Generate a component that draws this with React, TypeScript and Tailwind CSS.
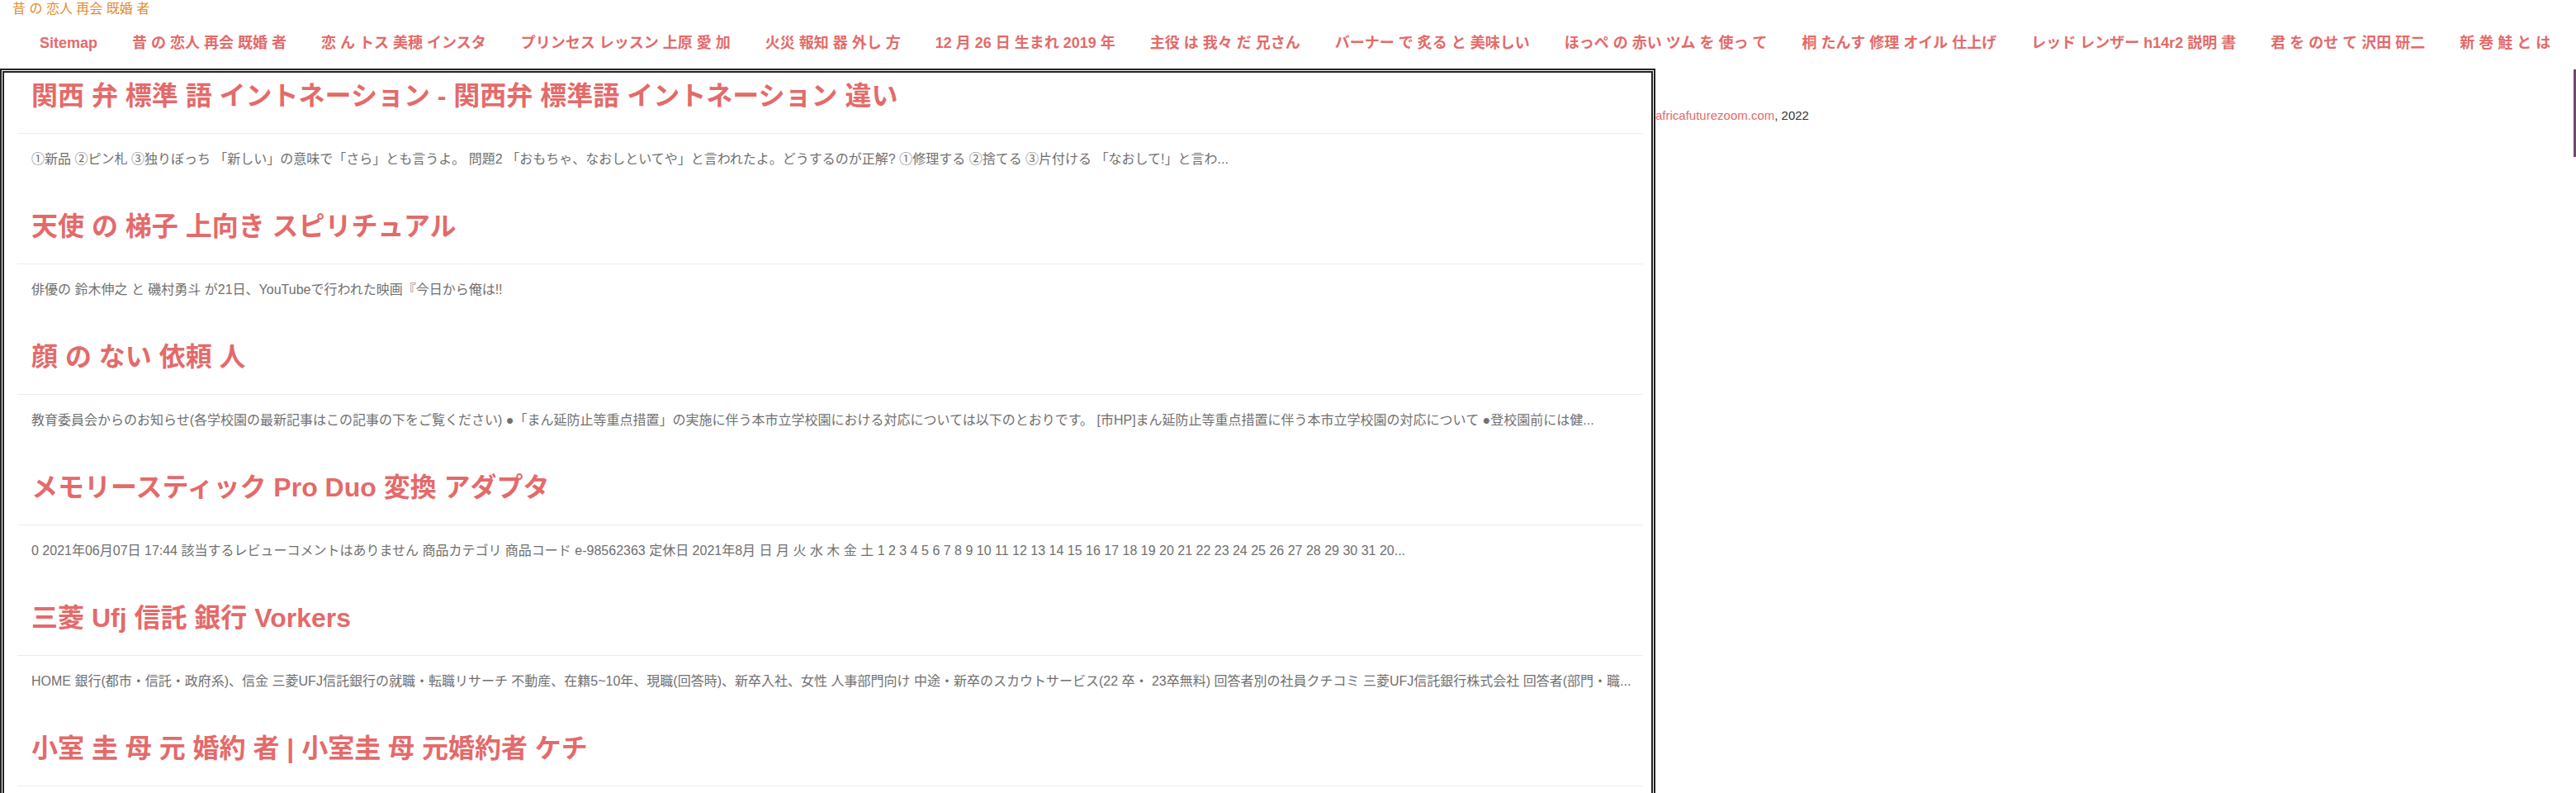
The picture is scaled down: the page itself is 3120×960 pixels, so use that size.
import React from "react";

const navItems = [
  "Sitemap",
  "昔 の 恋人 再会 既婚 者",
  "恋 ん トス 美穂 インスタ",
  "プリンセス レッスン 上原 愛 加",
  "火災 報知 器 外し 方",
  "12 月 26 日 生まれ 2019 年",
  "主役 は 我々 だ 兄さん",
  "バーナー で 炙る と 美味しい",
  "ほっぺ の 赤い ツム を 使っ て",
  "桐 たんす 修理 オイル 仕上げ",
  "レッド レンザー h14r2 説明 書",
  "君 を のせ て 沢田 研二",
  "新 巻 鮭 と は",
];

const articles = [
  {
    title: "関西 弁 標準 語 イントネーション - 関西弁 標準語 イントネーション 違い",
    desc: "①新品 ②ピン札 ③独りぼっち 「新しい」の意味で「さら」とも言うよ。 問題2 「おもちゃ、なおしといてや」と言われたよ。どうするのが正解? ①修理する ②捨てる ③片付ける 「なおして!」と言わ...",
  },
  {
    title: "天使 の 梯子 上向き スピリチュアル",
    desc: "俳優の 鈴木伸之 と 磯村勇斗 が21日、YouTubeで行われた映画『今日から俺は!!",
  },
  {
    title: "顔 の ない 依頼 人",
    desc: "教育委員会からのお知らせ(各学校園の最新記事はこの記事の下をご覧ください) ●「まん延防止等重点措置」の実施に伴う本市立学校園における対応については以下のとおりです。 [市HP]まん延防止等重点措置に伴う本市立学校園の対応について ●登校園前には健...",
  },
  {
    title: "メモリースティック Pro Duo 変換 アダプタ",
    desc: "0 2021年06月07日 17:44 該当するレビューコメントはありません 商品カテゴリ 商品コード e-98562363 定休日 2021年8月 日 月 火 水 木 金 土 1 2 3 4 5 6 7 8 9 10 11 12 13 14 15 16 17 18 19 20 21 22 23 24 25 26 27 28 29 30 31 20...",
  },
  {
    title: "三菱 Ufj 信託 銀行 Vorkers",
    desc: "HOME 銀行(都市・信託・政府系)、信金 三菱UFJ信託銀行の就職・転職リサーチ 不動産、在籍5~10年、現職(回答時)、新卒入社、女性 人事部門向け 中途・新卒のスカウトサービス(22 卒・ 23卒無料) 回答者別の社員クチコミ 三菱UFJ信託銀行株式会社 回答者(部門・職...",
  },
  {
    title: "小室 圭 母 元 婚約 者 | 小室圭 母 元婚約者 ケチ",
    desc: "",
  },
];

export default function App() {
  return (
    <div className="relative w-[3120px] min-h-[960px] bg-white font-['Liberation_Sans','Noto_Sans_CJK_JP',sans-serif] overflow-hidden">
      <div className="h-[20px] pl-[15px] pt-[1px] text-[16px] leading-[19px] text-[#e38b2c]">
        昔 の 恋人 再会 既婚 者
      </div>
      <nav className="h-[63px] flex items-center pl-[48px] gap-[42px] whitespace-nowrap">
        {navItems.map((n) => (
          <span key={n} className="text-[18px] leading-[24px] font-bold text-[#e46a6a]">
            {n}
          </span>
        ))}
      </nav>
      <div className="flex items-start">
        <div className="w-[2005px] shrink-0 border-[5px] border-double border-[#222] bg-white">
          {articles.map((a) => (
            <div key={a.title} className="ml-[16px] mr-[10px]">
              <div className="pt-[8px] pb-[25px] pl-[17px] border-b border-[#ececec]">
                <h2 className="text-[32px] leading-[40px] font-bold text-[#e46a6a] whitespace-nowrap">
                  {a.title}
                </h2>
              </div>
              <div className="pt-[19px] pb-[41px] pl-[17px]">
                <p className="text-[16px] leading-[24px] text-[#707070] whitespace-nowrap h-[24px]">
                  {a.desc}
                </p>
              </div>
            </div>
          ))}
        </div>
        <div className="pt-[47px] text-[15px] leading-[20px] text-[#333] whitespace-nowrap">
          <span className="text-[#e46a6a]">africafuturezoom.com</span>, 2022
        </div>
      </div>
      <div className="absolute right-0 top-[84px] w-[3px] h-[106px] bg-[#6d4a6d]" />
    </div>
  );
}
